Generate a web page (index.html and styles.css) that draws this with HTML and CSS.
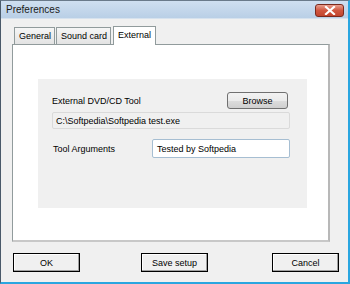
FILE: index.html
```html
<!DOCTYPE html>
<html>
<head>
<meta charset="utf-8">
<link rel="stylesheet" href="styles.css">
</head>
<body>
<div class="window">
  <div class="titlebar">
    <span class="title">Preferences</span>
    <span class="close"><svg width="14" height="9" viewBox="0 0 14 9"><path d="M3 1 L11 8 M11 1 L3 8" stroke="#fff" stroke-width="2.2" stroke-linecap="square"/></svg></span>
  </div>
  <div class="content">
    <div class="tabs">
      <div class="tab">General</div>
      <div class="tab">Sound card</div>
      <div class="tab active">External</div>
    </div>
    <div class="panel">
      <div class="group">
        <div class="row">
          <span class="label">External DVD/CD Tool</span>
          <button class="browse">Browse</button>
        </div>
        <div class="path">C:\Softpedia\Softpedia test.exe</div>
        <div class="row args">
          <span class="label">Tool Arguments</span>
          <div class="input">Tested by Softpedia</div>
        </div>
      </div>
    </div>
    <div class="buttons">
      <button class="btn">OK</button>
      <button class="btn save">Save setup</button>
      <button class="btn">Cancel</button>
    </div>
  </div>
</div>
</body>
</html>
```
FILE: styles.css
```css
* { box-sizing: border-box; }
html, body { margin: 0; padding: 0; }
body {
  width: 350px;
  height: 284px;
  overflow: hidden;
  font-family: "Liberation Sans", Arial, sans-serif;
  font-size: 9px;
  color: #000;
}
.window {
  width: 350px;
  height: 284px;
  background: #f0f0f0;
  border-left: 1px solid #4a5a6a;
  border-top: 1px solid #6a7a8a;
  border-right: 2px solid #2aa6e0;
  border-bottom: 2px solid #2aa6e0;
  display: flex;
  flex-direction: column;
}
.titlebar {
  height: 18px;
  background: linear-gradient(#cfdff0, #b9cfe6);
  display: flex;
  align-items: center;
  justify-content: space-between;
  padding: 0 4px 0 5px;
  border-bottom: 1px solid #d6e2ee;
}
.title {
  font-size: 10px;
  color: #1a1a1a;
}
.close {
  width: 29px;
  height: 13px;
  border: 1px solid #7a2a1e;
  border-radius: 3px;
  background: linear-gradient(#e8a090, #d0563f 50%, #c2452e);
  display: flex;
  align-items: center;
  justify-content: center;
  margin-top: 2px;
}
.content {
  flex: 1;
  padding: 6px 18px 0 11px;
  display: flex;
  flex-direction: column;
}
.tabs {
  display: flex;
  align-items: flex-end;
  height: 19px;
  padding-left: 2px;
  position: relative;
  z-index: 1;
}
.tab {
  height: 17px;
  padding: 0 3px 0 4px;
  border: 1px solid #919b9c;
  border-bottom: none;
  background: linear-gradient(#f6f6f6, #e3e3e3);
  display: flex;
  align-items: center;
  margin-right: 1px;
}
.tab.active {
  height: 19px;
  background: #fff;
  padding: 0 4px 3px 4px;
  margin-left: 1px;
  margin-bottom: -1px;
}
.panel {
  height: 198px;
  background: #fff;
  border: 1px solid #919b9c;
  border-right: 2px solid #b8b8b8;
  border-bottom: 2px solid #c8c8c8;
  padding: 34px 21px 0 25px;
}
.group {
  height: 129px;
  background: #f0f0f0;
  padding: 13px 19px 0 14px;
}
.row {
  display: flex;
  align-items: center;
  justify-content: space-between;
  height: 17px;
}
.browse {
  width: 61px;
  height: 17px;
  font: inherit;
  padding: 0;
  border: 1px solid #707070;
  border-radius: 3px;
  background: linear-gradient(#f2f2f2 0%, #ebebeb 50%, #dddddd 51%, #cfcfcf 100%);
}
.path {
  margin-top: 3px;
  margin-right: -2px;
  height: 17px;
  border: 1px solid #dadada;
  border-radius: 2px;
  padding-left: 3px;
  display: flex;
  align-items: center;
}
.args {
  margin-top: 10px;
  height: 19px;
}
.args .label { padding-left: 1px; }
.input {
  width: 138px;
  height: 19px;
  margin-right: -2px;
  background: #fff;
  border: 1px solid #a6bed2;
  border-radius: 2px;
  padding-left: 4px;
  display: flex;
  align-items: center;
}
.buttons {
  display: flex;
  justify-content: space-between;
  margin-top: 11px;
  padding-left: 1px;
  margin-right: -9px;
}
.btn {
  width: 67px;
  height: 19px;
  font: inherit;
  padding: 0;
  background: #f0f0f0;
  border: 1px solid #000;
  box-shadow: inset -1px -1px 0 #a0a0a0, inset 1px 1px 0 #fff;
}
.btn.save { margin-left: -3px; }
```
